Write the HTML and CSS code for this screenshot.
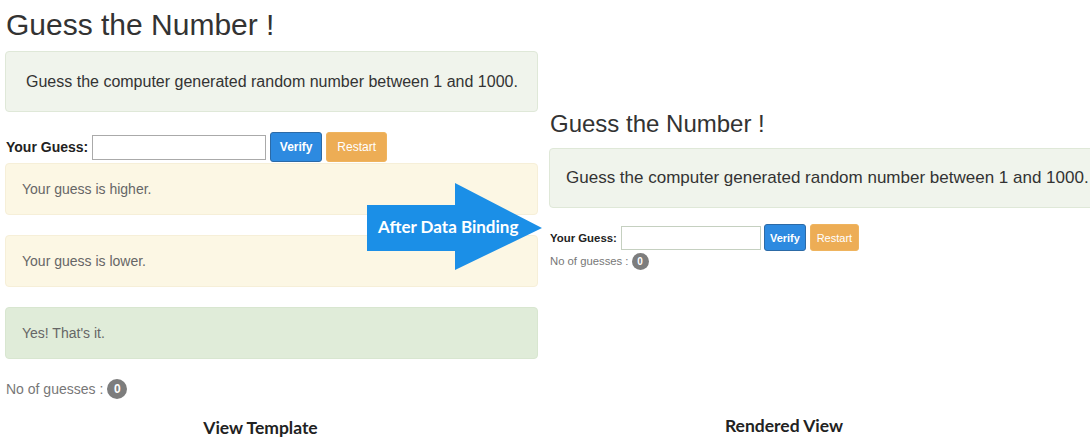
FILE: index.html
```html
<!DOCTYPE html>
<html>
<head>
<meta charset="utf-8">
<link rel="stylesheet" href="styles.css">
</head>
<body>
<div class="page">
  <section class="panel panel-left">
    <h1 class="title">Guess the Number !</h1>
    <div class="well"><p class="lead">Guess the computer generated random number between 1 and 1000.</p></div>
    <div class="guess-row">
      <label class="guess-label">Your Guess:</label>
      <span class="guess-input"></span>
      <span class="btn btn-primary">Verify</span>
      <span class="btn btn-warning">Restart</span>
    </div>
    <div class="alert alert-warning first">Your guess is higher.</div>
    <div class="alert alert-warning">Your guess is lower.</div>
    <div class="alert alert-success">Yes! That's it.</div>
    <p class="count">No of guesses : <span class="badge">0</span></p>
    <p class="caption">View Template</p>
  </section>
  <section class="panel panel-right">
    <h1 class="title">Guess the Number !</h1>
    <div class="well"><p class="lead">Guess the computer generated random number between 1 and 1000.</p></div>
    <div class="guess-row">
      <label class="guess-label">Your Guess:</label>
      <span class="guess-input"></span>
      <span class="btn btn-primary">Verify</span>
      <span class="btn btn-warning">Restart</span>
    </div>
    <p class="count">No of guesses : <span class="badge">0</span></p>
    <p class="caption">Rendered View</p>
  </section>
  <div class="arrow">
    <svg class="arrow-shape" width="175" height="87" viewBox="0 0 175 87">
      <polygon points="0,22 88,22 88,0 175,45 88,87 88,68 0,68" fill="#1b8fe7"/>
    </svg>
    <span class="arrow-text">After Data Binding</span>
  </div>
</div>
</body>
</html>
```

FILE: styles.css
```css
html, body {
  margin: 0;
  padding: 0;
  background: #fff;
}
body {
  width: 1090px;
  height: 448px;
  overflow: hidden;
  font-family: "Liberation Sans", Arial, sans-serif;
  color: #333;
}
.page {
  position: relative;
  display: flex;
  width: 1090px;
  height: 448px;
}
.panel {
  display: flex;
  flex-direction: column;
  flex-shrink: 0;
}
.panel-left {
  width: 533px;
  padding-left: 5px;
}
.panel-right {
  width: 560px;
  margin-left: 11px;
  padding-top: 105px;
}
.title {
  margin: 0;
  font-weight: normal;
  color: #333;
}
.panel-left .title {
  font-size: 30px;
  line-height: 34px;
  margin: 8px 0 9px 1px;
}
.panel-right .title {
  font-size: 24px;
  line-height: 30px;
  margin: 4px 0 9px 1px;
}
.well {
  box-sizing: border-box;
  background: #f0f4ec;
  border: 1px solid #dfe8d8;
  border-radius: 4px;
  display: flex;
  align-items: center;
}
.panel-left .well {
  height: 61px;
  padding-left: 20px;
}
.panel-right .well {
  height: 60px;
  padding-left: 16px;
}
.lead {
  margin: 0;
  white-space: nowrap;
  color: #333;
}
.panel-left .lead { font-size: 16px; }
.panel-right .lead { font-size: 17px; }

.guess-row {
  display: flex;
  align-items: center;
}
.panel-left .guess-row {
  margin-top: 20px;
  height: 30px;
}
.panel-right .guess-row {
  margin-top: 16px;
  height: 27px;
}
.guess-label {
  font-weight: bold;
  color: #222;
}
.panel-left .guess-label { font-size: 14px; margin-left: 1px; margin-right: 4px; }
.panel-right .guess-label { font-size: 11.4px; margin-left: 1px; margin-right: 4px; }
.guess-input {
  box-sizing: border-box;
  background: #fff;
  border: 1px solid #aaa;
}
.panel-left .guess-input { width: 174px; height: 25px; margin-right: 4px; }
.panel-right .guess-input { width: 140px; height: 24px; margin-right: 3px; border-color: #c5d0c0; }
.btn {
  box-sizing: border-box;
  display: flex;
  align-items: center;
  justify-content: center;
  color: #fff;
  border-radius: 3px;
}
.panel-left .btn { height: 30px; font-size: 12px; }
.panel-right .btn { height: 27px; font-size: 11px; }
.btn-primary {
  background: #2d8ae0;
  border: 1px solid #2c6aa6;
  font-weight: bold;
}
.btn-warning {
  background: #edad55;
  border: 1px solid #efb45e;
}
.panel-left .btn-primary { width: 52px; margin-right: 4px; }
.panel-left .btn-warning { width: 61px; }
.panel-right .btn-primary { width: 42px; margin-right: 4px; }
.panel-right .btn-warning { width: 49px; }

.alert {
  box-sizing: border-box;
  height: 52px;
  border-radius: 4px;
  padding-left: 16px;
  display: flex;
  align-items: center;
  font-size: 14px;
  color: #666;
  margin-top: 20px;
}
.alert.first { margin-top: 1px; }
.alert-warning {
  background: #fcf7e4;
  border: 1px solid #f6efd8;
}
.alert-success {
  background: #e0ecd9;
  border: 1px solid #d8e6d0;
}
.count {
  margin: 0;
  color: #777;
  display: flex;
  align-items: center;
}
.panel-left .count {
  font-size: 14px;
  margin-top: 20px;
  margin-left: 1px;
  height: 20px;
}
.panel-right .count {
  font-size: 11.3px;
  margin-top: 1px;
  margin-left: 1px;
  height: 18px;
}
.badge {
  display: inline-flex;
  align-items: center;
  justify-content: center;
  border-radius: 50%;
  background: #7d7d7d;
  color: #fff;
  font-weight: bold;
}
.panel-left .badge { width: 20px; height: 20px; font-size: 12px; margin-left: 4px; }
.panel-right .badge { width: 17px; height: 17px; font-size: 10px; margin-left: 3px; }
.caption {
  margin: 0;
  font-family: Lato, "Open Sans", sans-serif;
  font-weight: bold;
  font-size: 17.5px;
  color: #222;
  text-align: center;
}
.panel-left .caption { margin-top: 18px; width: 511px; }
.panel-right .caption { margin-top: auto; margin-bottom: 12px; width: 470px; }

.arrow {
  position: absolute;
  left: 367px;
  top: 183px;
  width: 175px;
  height: 87px;
}
.arrow-shape {
  display: block;
}
.arrow-text {
  position: absolute;
  left: 11px;
  top: 33px;
  font-family: Lato, "Open Sans", sans-serif;
  font-weight: bold;
  font-size: 17px;
  color: #fff;
  white-space: nowrap;
}
```
